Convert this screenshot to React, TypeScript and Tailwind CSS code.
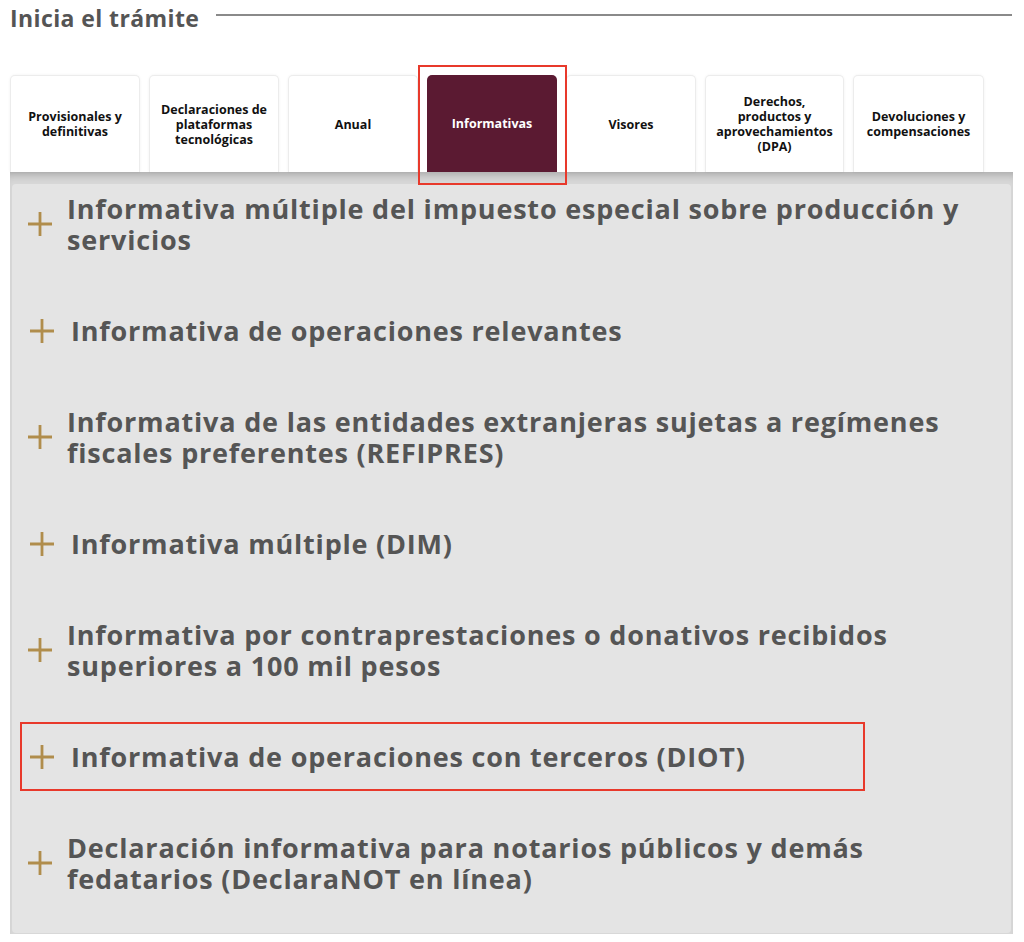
const tabs = [
  { label: "Provisionales y definitivas", w: "w-[130px]" },
  { label: "Declaraciones de plataformas tecnológicas", w: "w-[130px]" },
  { label: "Anual", w: "w-[130px]" },
  { label: "Informativas", w: "w-[130px]", active: true },
  { label: "Visores", w: "w-[130px]" },
  { label: "Derechos, productos y aprovechamientos (DPA)", w: "w-[139px]" },
  { label: "Devoluciones y compensaciones", w: "w-[131px]" },
];

const items = [
  { text: "Informativa múltiple del impuesto especial sobre producción y servicios", twoLines: true },
  { text: "Informativa de operaciones relevantes" },
  { text: "Informativa de las entidades extranjeras sujetas a regímenes fiscales preferentes (REFIPRES)", twoLines: true },
  { text: "Informativa múltiple (DIM)" },
  { text: "Informativa por contraprestaciones o donativos recibidos superiores a 100 mil pesos", twoLines: true },
  { text: "Informativa de operaciones con terceros (DIOT)", marked: true },
  { text: "Declaración informativa para notarios públicos y demás fedatarios (DeclaraNOT en línea)", twoLines: true },
];

function PlusIcon() {
  return (
    <svg width="24" height="24" viewBox="0 0 24 24" className="shrink-0">
      <path d="M12 0v24M0 12h24" stroke="#b08d4c" strokeWidth="2.8" />
    </svg>
  );
}

export default function App() {
  return (
    <div className="min-h-[942px] bg-white px-[10px] pt-[3px] font-['Open_Sans',sans-serif]">
      {/* HEADER */}
      <div className="flex items-center gap-[17px] pr-[2px]">
        <h2 className="whitespace-nowrap text-[23px] font-bold leading-[30px] tracking-[0.4px] text-[#555]">
          Inicia el trámite
        </h2>
        <div className="mb-[6px] h-[2px] flex-1 bg-[#8a8a8a]" />
      </div>

      {/* TABS */}
      <div className="mt-[42px] flex gap-[9px]">
        {tabs.map((t) => (
          <div key={t.label} className={`relative h-[97px] shrink-0 ${t.w}`}>
            <div
              className={`flex h-full items-center justify-center rounded-t-[5px] px-2 text-center text-[12.5px] font-bold leading-[15px] ${
                t.active
                  ? "bg-[#5b1a32] text-white"
                  : "border border-b-0 border-[#ececec] bg-white text-[#111] shadow-[0_0_3px_rgba(0,0,0,0.06)]"
              }`}
            >
              {t.label}
            </div>
            {t.active && (
              <div className="absolute -bottom-[13px] -left-[9px] -right-[10px] -top-[10px] z-10 border-2 border-[#e8392b]" />
            )}
          </div>
        ))}
      </div>

      {/* PANEL */}
      <div className="mr-[1px] bg-[#d8d8d8] px-[2px] pb-px pt-[12px] shadow-[inset_0_9px_8px_-6px_rgba(0,0,0,0.22)]">
        <div className="rounded-[4px] bg-[#e4e4e4] pb-[3px]">
          {items.map((it) => (
            <div
              key={it.text}
              className="relative flex h-[106.5px] items-center pb-[26px]"
            >
              <div
                className={`flex items-center ${
                  it.twoLines ? "gap-[15px] pl-[16px]" : "gap-[17px] pl-[18px]"
                }`}
              >
                <PlusIcon />
                <p className="max-w-[920px] text-[27px] font-bold leading-[31px] tracking-[0.8px] text-[#555]">
                  {it.text}
                </p>
              </div>
              {it.marked && (
                <div className="absolute left-[8px] top-[5px] h-[69px] w-[845px] border-2 border-[#e8392b]" />
              )}
            </div>
          ))}
        </div>
      </div>
    </div>
  );
}
